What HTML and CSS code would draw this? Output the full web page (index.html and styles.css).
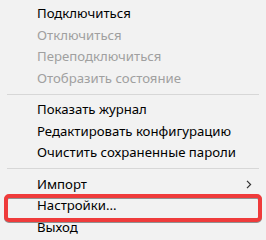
FILE: index.html
```html
<!DOCTYPE html>
<html lang="ru">
<head>
<meta charset="utf-8">
<link rel="stylesheet" href="styles.css">
</head>
<body>
<div class="menu">
  <div class="item">Подключиться</div>
  <div class="item disabled">Отключиться</div>
  <div class="item disabled">Переподключиться</div>
  <div class="item disabled">Отобразить состояние</div>
  <div class="sep"></div>
  <div class="item">Показать журнал</div>
  <div class="item">Редактировать конфигурацию</div>
  <div class="item">Очистить сохраненные пароли</div>
  <div class="sep"></div>
  <div class="item sub">Импорт
    <svg class="arrow" width="6" height="9" viewBox="0 0 6 9"><path d="M1 0.8 L4.6 4.5 L1 8.2" fill="none" stroke="#333" stroke-width="1.2"/></svg>
  </div>
  <div class="item">Настройки...</div>
  <div class="item">Выход</div>
  <div class="highlight"></div>
</div>
</body>
</html>
```
FILE: styles.css
```css
html, body {
  margin: 0;
  padding: 0;
  background: #f2f2f2;
}
.menu {
  position: relative;
  width: 266px;
  height: 240px;
  padding-top: 3px;
  box-sizing: border-box;
  font-family: "Noto Sans", "Open Sans", sans-serif;
  font-size: 13.2px;
  color: #000;
}
.item {
  height: 21.5px;
  line-height: 21.5px;
  padding-left: 37px;
  display: flex;
  align-items: center;
  white-space: nowrap;
}
.item.disabled {
  color: #a0a0a0;
}
.item.sub {
  justify-content: space-between;
  padding-right: 14px;
}
.arrow {
  display: block;
}
.sep {
  height: 10px;
  display: flex;
  align-items: center;
  padding: 0 7px;
}
.sep::before {
  content: "";
  flex: 1;
  height: 1px;
  background: #d7d7d7;
}
.highlight {
  position: absolute;
  left: 4px;
  top: 194px;
  width: 258px;
  height: 28px;
  box-sizing: border-box;
  border: 4px solid #ef3b3b;
  border-radius: 5px;
  filter: drop-shadow(0 1px 0 rgba(0, 0, 0, 0.4));
}
```
